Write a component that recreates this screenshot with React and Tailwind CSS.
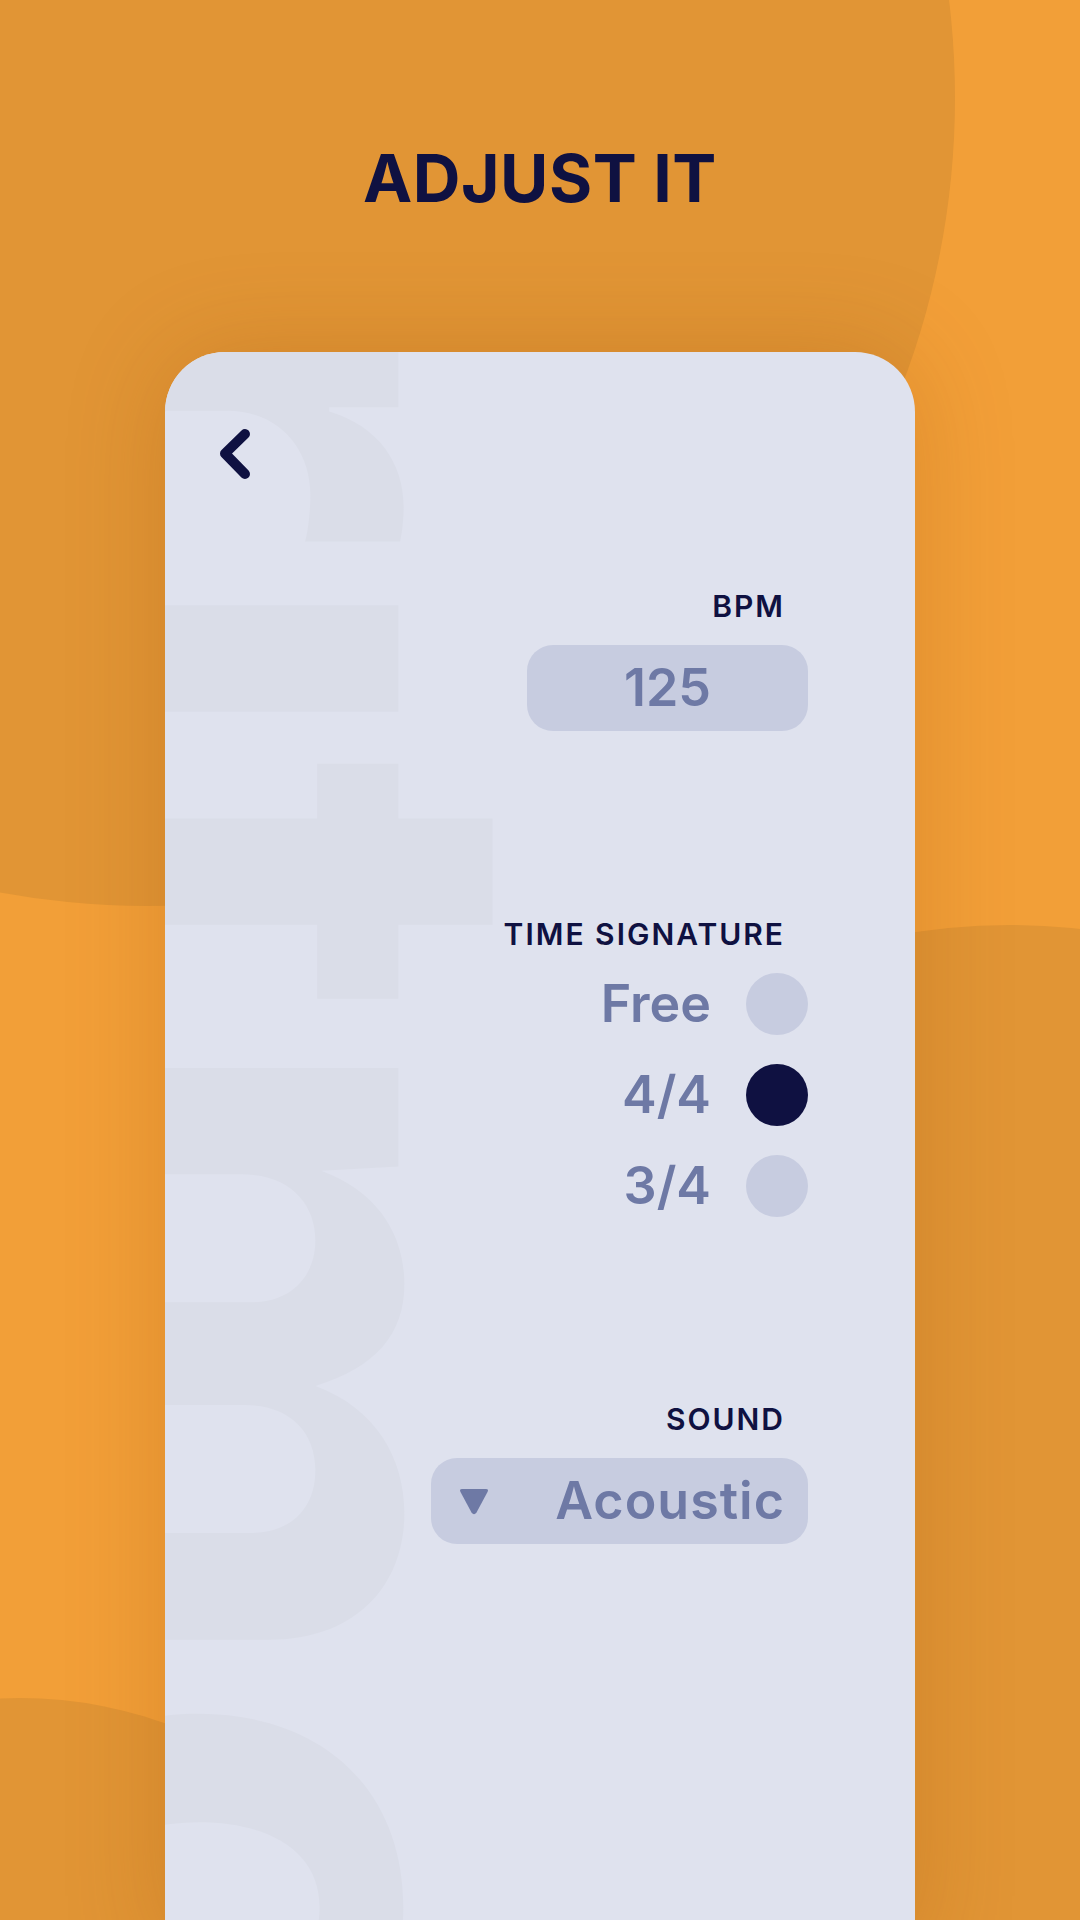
import React from 'react';

const font = { fontFamily: 'Inter, "Noto Sans", sans-serif' };

// Tempo choices shown under TIME SIGNATURE
const signatures = [
  { label: 'Free', active: false },
  { label: '4/4', active: true },
  { label: '3/4', active: false },
];

const BackIcon = () => (
  <svg className="block" width="40" height="62" viewBox="0 0 40 62" fill="none" aria-hidden="true">
    <polyline
      points="30,10 10,29.5 30,50"
      stroke="#0f1141"
      strokeWidth="10"
      strokeLinecap="round"
      strokeLinejoin="round"
    />
  </svg>
);

const App = () => {
  return (
    <div
      className="relative h-[1920px] w-full overflow-hidden bg-[#f29f38]"
      style={font}
    >
      {/* background blobs */}
      <div className="absolute left-[-661px] top-[-710px] h-[1616px] w-[1616px] rounded-full bg-[#e19535]" />
      <div className="absolute left-[380px] top-[925px] h-[1260px] w-[1260px] rounded-full bg-[#e19535]" />
      <div className="absolute left-[-406px] top-[1698px] h-[852px] w-[852px] rounded-full bg-[#e19535]" />

      <div className="relative flex flex-col items-center">
        <div className="flex h-[352px] w-full justify-center pt-[145px]">
          <h1 className="text-[66px] font-bold leading-none tracking-[0.5px] text-[#0f1141]">
            ADJUST IT
          </h1>
        </div>

        <div className="relative h-[1600px] w-[750px] overflow-hidden rounded-t-[60px] bg-[#dfe2ee] shadow-[0_0_100px_rgba(140,70,0,0.22)]">
          {/* faint watermark word */}
          <div className="pointer-events-none absolute left-[-262px] top-[-93px] select-none text-[726px] font-bold leading-none text-[#dadde8] [writing-mode:vertical-rl]">
            rıtmo
          </div>

          <div className="relative flex flex-col pl-[50px] pr-[107px] pt-[72px]">
            <BackIcon />

            <div className="mt-[105px] flex flex-col items-end">
              <p className="mr-[23px] text-[30px] font-semibold leading-none tracking-[2px] text-[#0f1141]">
                BPM
              </p>
              <div className="mt-[24px] flex h-[86px] w-[281px] items-center justify-center rounded-[26px] bg-[#c7cce0]">
                <span className="text-[52px] font-semibold leading-none text-[#6e79a5]">125</span>
              </div>
            </div>

            <div className="mt-[188px] flex flex-col items-end">
              <p className="mr-[23px] text-[30px] font-semibold leading-none tracking-[2px] text-[#0f1141]">
                TIME SIGNATURE
              </p>
              <div className="mt-[24px] flex flex-col items-end gap-[29px]">
                {signatures.map((s) => (
                  <div key={s.label} className="flex h-[62px] items-center gap-[35px]">
                    <span className="text-[52px] font-semibold leading-none text-[#6e79a5]">
                      {s.label}
                    </span>
                    <span
                      className={`h-[62px] w-[62px] rounded-full ${
                        s.active ? 'bg-[#0f1141]' : 'bg-[#c7cce0]'
                      }`}
                    />
                  </div>
                ))}
              </div>
            </div>

            <div className="mt-[187px] flex flex-col items-end">
              <p className="mr-[23px] text-[30px] font-semibold leading-none tracking-[2px] text-[#0f1141]">
                SOUND
              </p>
              <div className="mt-[24px] flex h-[86px] w-[377px] items-center justify-between rounded-[26px] bg-[#c7cce0] pl-[27px] pr-[23px]">
                <svg width="32" height="29" viewBox="0 0 32 29" aria-hidden="true">
                  <path
                    d="M4 2 H28 Q31 2 29.5 5 L18.5 25.5 Q16 29 13.5 25.5 L2.5 5 Q1 2 4 2 Z"
                    fill="#6e79a5"
                  />
                </svg>
                <span className="text-[52px] font-semibold leading-none tracking-[1px] text-[#6e79a5]">Acoustic</span>
              </div>
            </div>
          </div>
        </div>
      </div>
    </div>
  );
};

export default App;
